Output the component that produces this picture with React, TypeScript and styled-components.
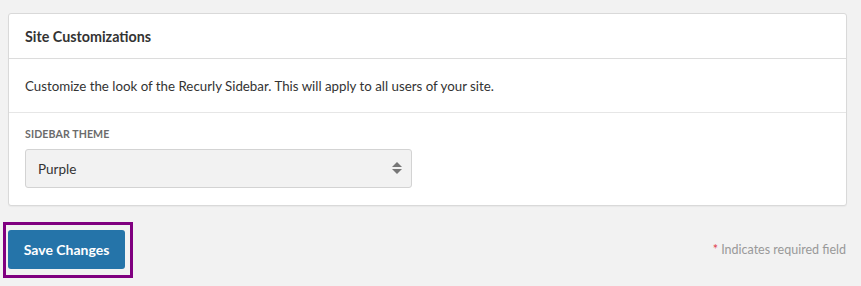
import React, { useState } from "react";
import styled, { createGlobalStyle } from "styled-components";

const GlobalStyle = createGlobalStyle`
  html, body {
    margin: 0;
    padding: 0;
    background: #f2f2f2;
  }
  body {
    font-family: Lato, "Liberation Sans", sans-serif;
    color: #333;
  }
`;

const Page = styled.div`
  padding: 13px 14px 0 8px;
`;

const Card = styled.div`
  background: #fff;
  border: 1px solid #d9d9d9;
  border-radius: 3px;
  box-shadow: 0 1px 1px rgba(0, 0, 0, 0.04);
`;

const CardHeader = styled.div`
  height: 44px;
  display: flex;
  align-items: center;
  padding: 0 16px;
  border-bottom: 1px solid #dcdcdc;

  h2 {
    margin: 0;
    font-size: 14.3px;
    font-weight: 700;
    color: #333;
  }
`;

const CardSection = styled.div<{ $divided?: boolean }>`
  padding: ${(p) => (p.$divided ? "0 16px" : "15px 16px 17px")};
  border-bottom: ${(p) => (p.$divided ? "1px solid #e6e6e6" : "none")};
`;

const Description = styled.p`
  margin: 0;
  height: 53px;
  display: flex;
  align-items: center;
  font-size: 13.3px;
  color: #333;
`;

const Label = styled.label`
  display: block;
  font-size: 10.6px;
  font-weight: 700;
  letter-spacing: 0.1px;
  text-transform: uppercase;
  color: #6b6b6b;
  margin-bottom: 9px;
`;

const SelectBox = styled.div`
  position: relative;
  width: 387px;
  height: 39px;
  box-sizing: border-box;
`;

const Select = styled.select`
  appearance: none;
  width: 100%;
  height: 100%;
  box-sizing: border-box;
  background: #f2f2f2;
  border: 1px solid #d3d3d3;
  border-radius: 3px;
  padding: 0 12px;
  font-family: inherit;
  font-size: 13.5px;
  color: #333;
  outline: none;
`;

const Arrows = styled.svg`
  position: absolute;
  right: 10px;
  top: 13px;
  pointer-events: none;
`;

const Footer = styled.div`
  display: flex;
  align-items: center;
  justify-content: space-between;
  margin: 16px 0 0 -5px;
`;

const FocusRing = styled.div`
  border: 3px solid #800080;
  padding: 5px 5px 6px 2px;
`;

const Button = styled.button`
  width: 117px;
  height: 39px;
  border: none;
  border-radius: 3px;
  background: #2574a9;
  color: #fff;
  font-family: inherit;
  font-size: 14px;
  font-weight: 700;
  cursor: pointer;
  padding-bottom: 2px;
`;

const Required = styled.span`
  font-size: 12.5px;
  color: #999;
  margin-right: 1px;
  margin-bottom: 2px;

  b {
    color: #e0414b;
    font-weight: 400;
  }
`;

export default function App() {
  const [theme, setTheme] = useState("purple");

  return (
    <>
      <GlobalStyle />
      <Page>
        <Card>
          <CardHeader>
            <h2>Site Customizations</h2>
          </CardHeader>
          <CardSection $divided>
            <Description>
              Customize the look of the Recurly Sidebar. This will apply to all users of your site.
            </Description>
          </CardSection>
          <CardSection>
            <Label>Sidebar Theme</Label>
            <SelectBox>
              <Select value={theme} onChange={(e) => setTheme(e.target.value)}>
                <option value="purple">Purple</option>
                <option value="blue">Blue</option>
                <option value="dark">Dark</option>
              </Select>
              <Arrows width="10" height="12" viewBox="0 0 10 12">
                <path d="M5 0 L10 5 L0 5 Z" fill="#777" />
                <path d="M0 7 L10 7 L5 12 Z" fill="#777" />
              </Arrows>
            </SelectBox>
          </CardSection>
        </Card>
        <Footer>
          <FocusRing>
            <Button>Save Changes</Button>
          </FocusRing>
          <Required>
            <b>*</b> Indicates required field
          </Required>
        </Footer>
      </Page>
    </>
  );
}
